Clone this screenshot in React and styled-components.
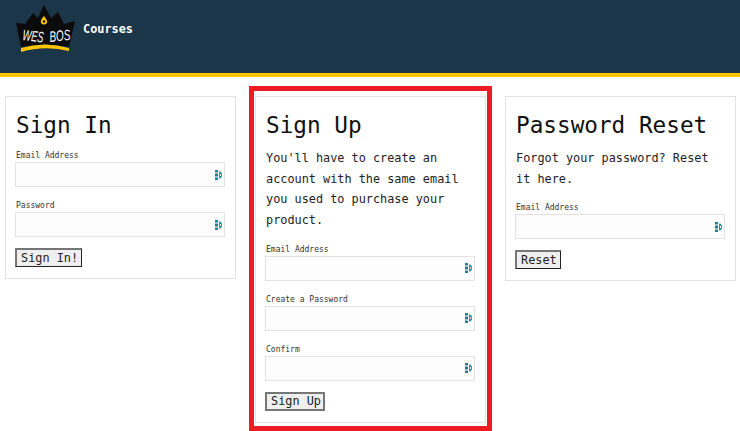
import styled, { createGlobalStyle } from 'styled-components';

const GlobalStyle = createGlobalStyle`
    html, body, #root {
        margin: 0;
        padding: 0;
        height: 100%;
        background: #ffffff;
    }
    body {
        font-family: "DejaVu Sans Mono", monospace;
        color: #222222;
    }
`

const Header = styled.header`
    height: 69px;
    background-color: #1b3549;
    border-bottom: 4px solid #ffc600;
    display: flex;
    align-items: flex-start;
    padding: 4px 0 0 15px;
`
const CoursesLink = styled.a`
    color: #ffffff;
    font-size: 11.850px;
    font-weight: bold;
    line-height: 14px;
    margin: 18px 0 0 8px;
`
const Forms = styled.main`
    display: grid;
    grid-template-columns: repeat(3, 231px);
    column-gap: 19px;
    align-items: start;
    padding: 19px 0 0 5px;
`
const Card = styled.form`
    position: relative;
    border: 1px solid #e2e2e2;
    padding: 14px 10px 11px 9px;
    box-sizing: border-box;
    ${props => props.highlighted && `
        &::after {
            content: '';
            position: absolute;
            top: -11px;
            left: -7px;
            right: -7px;
            bottom: -9px;
            border: 5px solid #ed1c24;
            pointer-events: none;
        }
    `}
`
const Title = styled.h2`
    margin: 0 0 12px 1px;
    font-size: 22.700px;
    font-weight: normal;
    line-height: 28px;
    color: #111111;
`
const Intro = styled.p`
    margin: -3px 0 14px 1px;
    font-size: 11.850px;
    line-height: 20.740px;
    color: #222222;
`
const Field = styled.label`
    display: block;
    margin-bottom: 14px;
`
const FieldLabel = styled.span`
    display: block;
    font-size: 8px;
    line-height: 10px;
    margin: 0 0 1px 1px;
    color: #333333;
`
const InputWrap = styled.span`
    display: flex;
    align-items: center;
    justify-content: flex-end;
    height: 25px;
    border: 1px solid #e2e2e2;
    background: #fdfdfd;
    box-sizing: border-box;
    padding-right: 2px;
`
const SubmitButton = styled.button`
    display: block;
    font-family: "DejaVu Sans Mono", monospace;
    font-size: 11.850px;
    line-height: 14px;
    height: 19px;
    padding: ${props => props.focused ? '0 2px 0 4px' : '0 3px 0 4px'};
    margin-top: -3px;
    color: #222222;
    background: #efefef;
    border-style: solid;
    border-width: ${props => props.focused ? '2px' : '2px 1px 1px 2px'};
    border-color: ${props => props.focused ? '#767676' : '#767676 #222222 #222222 #767676'};
    box-sizing: border-box;
`

function Logo() {
    return (
        <svg width="60" height="50" viewBox="0 0 60 50" style={{ display: 'block' }}>
            <path
                d="M1 19 L10 20 L18 9 L23 14 L29 1 L36 14 L43 8 L49 20 L60 17 L54 43 Q30 38 6 43 Z"
                fill="#0b0b0b"
            />
            <path d="M6 44 Q30 37 54 44 L54 47 Q30 41 6 48 Z" fill="#ffc600" />
            <path d="M29 12 Q33 17 32 19 Q29 22 26 19 Q25 16 29 12 Z" fill="#ffc600" />
            <circle cx="29" cy="17.500" r="1.200" fill="#0b0b0b" />
            <text
                fill="#ffffff"
                fontFamily="Liberation Sans, sans-serif"
                fontSize="15"
                fontStyle="italic"
                transform="translate(7 36) rotate(7) scale(0.62 1)"
            >
                WES
            </text>
            <text
                fill="#ffffff"
                fontFamily="Liberation Sans, sans-serif"
                fontSize="15"
                fontStyle="italic"
                transform="translate(35 38) rotate(-6) scale(0.66 1)"
            >
                BOS
            </text>
        </svg>
    )
}

function FillIcon() {
    return (
        <svg width="7" height="10" viewBox="0 0 7 10">
            <path d="M0 0h3v2.500H0zM0 3.500h3v3H0zM0 7.500h3V10H0z" fill="#1f7f96" />
            <path d="M4 1.500h1.500L7 3.500v3L5.500 8.500H4zM5 4v2h1V4z" fill="#2f8ea3" fillRule="evenodd" />
        </svg>
    )
}

function InputField({ label }) {
    return (
        <Field>
            <FieldLabel>{label}</FieldLabel>
            <InputWrap><FillIcon /></InputWrap>
        </Field>
    )
}

function App() {
    return (
        <>
            <GlobalStyle />
            <Header>
                <Logo />
                <CoursesLink>Courses</CoursesLink>
            </Header>
            <Forms>
                <Card>
                    <Title>Sign In</Title>
                    <InputField label="Email Address" />
                    <InputField label="Password" />
                    <SubmitButton type="button">Sign In!</SubmitButton>
                </Card>
                <Card highlighted>
                    <Title>Sign Up</Title>
                    <Intro>You'll have to create an account with the same email you used to purchase your product.</Intro>
                    <InputField label="Email Address" />
                    <InputField label="Create a Password" />
                    <InputField label="Confirm" />
                    <SubmitButton type="button" focused>Sign Up</SubmitButton>
                </Card>
                <Card>
                    <Title>Password Reset</Title>
                    <Intro>Forgot your password? Reset it here.</Intro>
                    <InputField label="Email Address" />
                    <SubmitButton type="button">Reset</SubmitButton>
                </Card>
            </Forms>
        </>
    )
}

export default App;
